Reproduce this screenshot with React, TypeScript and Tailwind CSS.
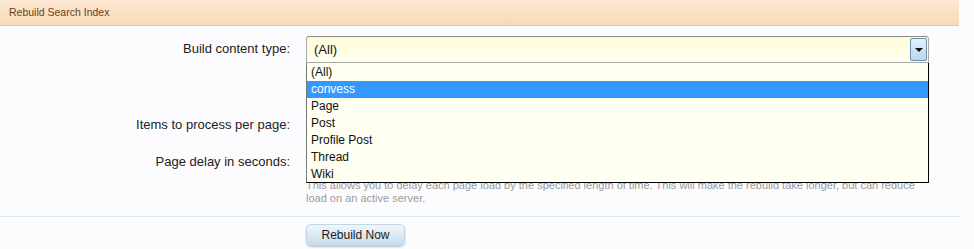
import React from "react";

const options = ["(All)", "convess", "Page", "Post", "Profile Post", "Thread", "Wiki"];

function Row({ label, children }: { label: string; children: React.ReactNode }) {
  return (
    <div className="flex items-start">
      <div className="w-[290px] shrink-0 text-right text-[13px] text-[#222] leading-[26px]">{label}</div>
      <div className="ml-[16px] w-[623px]">{children}</div>
    </div>
  );
}

export default function App() {
  return (
    <div
      className="relative w-[974px] h-[249px] overflow-hidden bg-[#fcfcff]"
      style={{ fontFamily: '"Liberation Sans", Arial, sans-serif' }}
    >
      <div className="w-[959px]">
        {/* header */}
        <div className="h-[26px] px-[9px] flex items-center text-[10.5px] text-[#6a3e1c] border-b border-[#f2c491] bg-gradient-to-b from-[#fbe7d1] to-[#f8dab8]">
          Rebuild Search Index
        </div>

        {/* content type */}
        <div className="mt-[10px]">
          <Row label="Build content type:">
            <div className="relative h-[27px] border border-[#a9a9a9] border-t-[#8c8c8c] rounded-t-[3px] bg-gradient-to-b from-[#fffcd6] to-[#fffff0] flex items-center pl-[7px] text-[13px] text-[#111]">
              (All)
              <div className="absolute right-[1px] top-[1px] w-[17px] h-[23px] border border-[#6f8ea8] rounded-[2px] bg-gradient-to-b from-[#e4f0fa] to-[#b9d7f0] flex items-center justify-center">
                <span className="block w-0 h-0 border-l-[4px] border-r-[4px] border-t-[4px] border-l-transparent border-r-transparent border-t-[#111]" />
              </div>
            </div>
          </Row>
        </div>

        {/* items per page */}
        <div className="mt-[49px]">
          <Row label="Items to process per page:">
            <div className="h-[26px] w-[150px] border border-[#a9a9a9] bg-[#fffff0]" />
          </Row>
        </div>

        {/* page delay */}
        <div className="mt-[11px]">
          <Row label="Page delay in seconds:">
            <div className="h-[26px] w-[150px] border border-[#a9a9a9] bg-[#fffff0]" />
            <p className="mt-[4px] text-[11px] leading-[13px] text-[#9a9a9a]">
              This allows you to delay each page load by the specified length of time. This will make the rebuild take longer, but can reduce
              <br />
              load on an active server.
            </p>
          </Row>
        </div>

        <div className="mt-[11px] border-t border-[#d6e9f0]" />

        <div className="mt-[5px] pl-[306px]">
          <button className="w-[99px] h-[22px] rounded-[5px] border border-[#c3d6e6] bg-gradient-to-b from-[#f0f6fb] to-[#c6dcee] shadow-[0_1px_2px_rgba(0,0,0,0.25)] text-[12px] text-[#1b1b1b]">
            Rebuild Now
          </button>
        </div>
      </div>

      {/* open dropdown list */}
      <div className="absolute left-[306px] top-[63px] w-[623px] h-[120px] border border-black border-l-[#777] border-t-0 bg-[#fffff2] pt-[1px]">
        {options.map((o) => (
          <div
            key={o}
            className={
              o === "convess"
                ? "h-[17px] pl-[4px] text-[12px] leading-[17px] bg-[#3399ff] text-white"
                : "h-[17px] pl-[4px] text-[12px] leading-[17px] text-[#111]"
            }
          >
            {o}
          </div>
        ))}
      </div>
    </div>
  );
}
